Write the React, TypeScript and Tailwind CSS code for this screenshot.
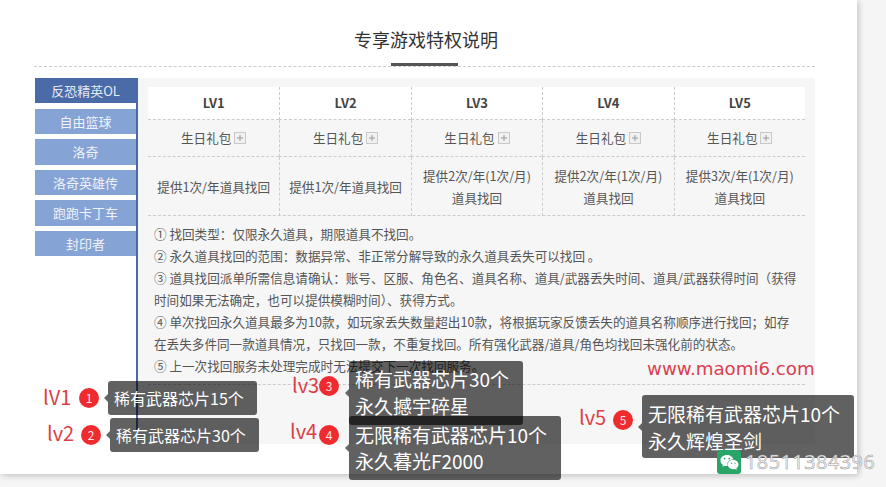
import { FaWeixin } from "react-icons/fa";

const font = "font-['Noto_Sans_CJK_SC','Microsoft_YaHei','Noto_Sans',sans-serif]";

const side = ["反恐精英OL", "自由篮球", "洛奇", "洛奇英雄传", "跑跑卡丁车", "封印者"];

const row3 = [
  ["提供1次/年道具找回"],
  ["提供1次/年道具找回"],
  ["提供2次/年(1次/月)", "道具找回"],
  ["提供2次/年(1次/月)", "道具找回"],
  ["提供3次/年(1次/月)", "道具找回"],
];

const notes = [
  "① 找回类型\uFF1A仅限永久道具\uFF0C期限道具不找回。",
  "② 永久道具找回的范围\uFF1A数据异常、非正常分解导致的永久道具丢失可以找回 。",
  "③ 道具找回派单所需信息请确认\uFF1A账号、区服、角色名、道具名称、道具/武器丢失时间、道具/武器获得时间\uFF08获得",
  "时间如果无法确定\uFF0C也可以提供模糊时间\uFF09、获得方式。",
  "④ 单次找回永久道具最多为10款\uFF0C如玩家丢失数量超出10款\uFF0C将根据玩家反馈丢失的道具名称顺序进行找回\uFF1B如存",
  "在丢失多件同一款道具情况\uFF0C只找回一款\uFF0C不重复找回。所有强化武器/道具/角色均找回未强化前的状态。",
  "⑤ 上一次找回服务未处理完成时无法提交下一次找回服务。",
];

function Plus() {
  return (
    <svg width="12" height="12" viewBox="0 0 12 12" className="ml-[3px] shrink-0">
      <rect x="0.5" y="0.5" width="11" height="11" fill="#f1f1f1" stroke="#c9c9c9" />
      <path d="M3 6h6M6 3v6" stroke="#9a9a9a" strokeWidth="1" />
    </svg>
  );
}

function Note({
  pos,
  label,
  labelClass,
  n,
  badgeClass,
  tipClass,
  lines,
}: {
  pos: string;
  label: string;
  labelClass: string;
  n: number;
  badgeClass: string;
  tipClass: string;
  lines: string[];
}) {
  return (
    <div className={`absolute flex items-start ${pos}`}>
      <span className={`shrink-0 text-[20px] leading-[24px] text-[#dc3f47] ${labelClass}`}>{label}</span>
      <span className={`flex h-[20px] w-[20px] shrink-0 items-center justify-center rounded-full bg-[#ee2c30] text-[12px] leading-none text-[#ffe3e3] ${badgeClass}`}>
        {n}
      </span>
      <div className={`relative rounded-[3px] bg-black/[0.62] pl-[6px] text-white ${tipClass}`}>
        <span className="absolute left-[-4px] top-1/2 h-0 w-0 -translate-y-1/2 border-y-[4px] border-r-[4px] border-y-transparent border-r-[#666]" />
        {lines.map((l) => (
          <div key={l} className="whitespace-nowrap">{l}</div>
        ))}
      </div>
    </div>
  );
}

export default function App() {
  return (
    <div className={`relative h-[487px] w-[886px] overflow-hidden bg-[#f5f5f5] ${font}`}>
      <div className="h-[474px] w-[857px] bg-white pt-[26px] shadow-[2px_2px_6px_rgba(0,0,0,0.2)]">
        <div className="ml-[34px] flex w-[781px] flex-col items-center border-b border-dashed border-[#ccc]">
          <h1 className="pl-[3px] text-[18px] leading-[26px] font-normal text-[#333]">专享游戏特权说明</h1>
          <div className="mt-[11px] h-[3px] w-[67px] bg-[#555]" />
        </div>

        <div className="mt-[11px] ml-[35px] flex h-[366px] w-[780px]">
          <div className="flex h-[365px] w-[103px] shrink-0 flex-col gap-[5.2px] border-r-2 border-[#4a6aa5]">
            {side.map((s, i) => (
              <div
                key={s}
                className={
                  i === 0
                    ? "flex h-[25.4px] items-center justify-center bg-[#4a6ba8] text-[13px] text-[#e6ecf7]"
                    : "flex h-[25.4px] items-center justify-center bg-[#86a3d5] text-[13px] text-[#eef2fa]"
                }
              >
                {s}
              </div>
            ))}
          </div>

          <div className="w-[677px] min-w-0 shrink-0 bg-[#f6f6f6] px-[10px] pt-[9px] text-[12.6px] text-[#555]">
            <div className="grid h-[129px] grid-cols-5 grid-rows-[33px_37px_59px] border-b border-dashed border-[#ccc]">
              {["LV1", "LV2", "LV3", "LV4", "LV5"].map((l, i) => (
                <div
                  key={l}
                  className={`flex min-w-0 items-center justify-center border-b border-dashed border-[#ccc] bg-white text-[13px] font-bold text-[#444] ${i > 0 ? "border-l" : ""}`}
                >
                  {l}
                </div>
              ))}
              {[0, 1, 2, 3, 4].map((i) => (
                <div
                  key={i}
                  className={`flex min-w-0 items-center justify-center border-b border-dashed border-[#ccc] ${i > 0 ? "border-l" : ""}`}
                >
                  生日礼包
                  <Plus />
                </div>
              ))}
              {row3.map((c, i) => (
                <div
                  key={i}
                  className={`flex min-w-0 flex-col items-center justify-center border-dashed border-[#ccc] leading-[22px] whitespace-nowrap ${i > 0 ? "border-l" : ""}`}
                >
                  {c.map((t) => (
                    <div key={t}>{t}</div>
                  ))}
                </div>
              ))}
            </div>
            <div className="border-b border-dashed border-[#ccc] pt-[7px] pb-[7px] pl-[6px] leading-[22px]">
              {notes.map((n) => (
                <div key={n} className="whitespace-nowrap">{n}</div>
              ))}
            </div>
          </div>
        </div>
      </div>

      <span className="absolute left-[647px] top-[357px] font-['DejaVu_Sans',sans-serif] text-[18.2px] leading-[24px] whitespace-nowrap text-[#d9404f]">
        www.maomi6.com
      </span>

      <Note
        pos="left-[43px] top-[381px]"
        label="lV1"
        labelClass="w-[36px] mt-[4px]"
        n={1}
        badgeClass="mt-[7px]"
        tipClass="ml-[9px] h-[34px] w-[149px] text-[16px] leading-[34px]"
        lines={["稀有武器芯片15个"]}
      />
      <Note
        pos="left-[47px] top-[418px]"
        label="lv2"
        labelClass="w-[34px] mt-[3px]"
        n={2}
        badgeClass="mt-[7px]"
        tipClass="ml-[9px] h-[34px] w-[149px] text-[16px] leading-[34px]"
        lines={["稀有武器芯片30个"]}
      />
      <Note
        pos="left-[292px] top-[361px]"
        label="lv3"
        labelClass="w-[27px] mt-[12px]"
        n={3}
        badgeClass="mt-[15px]"
        tipClass="ml-[10px] h-[64px] w-[174px] pt-[4px] text-[19px] leading-[27px]"
        lines={["稀有武器芯片30个", "永久撼宇碎星"]}
      />
      <Note
        pos="left-[290px] top-[416px]"
        label="lv4"
        labelClass="w-[29px] mt-[3px]"
        n={4}
        badgeClass="mt-[9px]"
        tipClass="ml-[10px] h-[64px] w-[212px] pt-[6px] text-[19px] leading-[26px]"
        lines={["无限稀有武器芯片10个", "永久暮光F2000"]}
      />
      <Note
        pos="left-[579px] top-[395px]"
        label="lv5"
        labelClass="w-[34px] mt-[10px]"
        n={5}
        badgeClass="mt-[15px]"
        tipClass="ml-[9px] h-[63px] w-[212px] pt-[5px] text-[19px] leading-[27px]"
        lines={["无限稀有武器芯片10个", "永久辉煌圣剑"]}
      />

      <div className="absolute left-[717px] top-[450px] flex items-center">
        <span className="flex h-[24px] w-[24px] items-center justify-center rounded-[3px] bg-[#2aa568] text-white">
          <FaWeixin size={19} />
        </span>
        <span className="ml-[4px] font-['Open_Sans',sans-serif] text-[20px] leading-[24px] tracking-[0.4px] text-[#f4f4f4] [-webkit-text-stroke:0.5px_#999]">
          18511384396
        </span>
      </div>
    </div>
  );
}
